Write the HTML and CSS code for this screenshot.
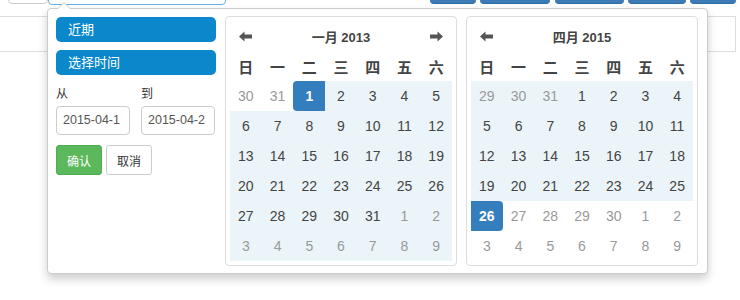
FILE: index.html
```html
<!DOCTYPE html>
<html lang="zh-CN">
<head>
  <meta charset="UTF-8">
  <title>日期范围选择</title>
  <link rel="stylesheet" href="styles.css">
</head>
<body>
  <div class="topbar">
    <span class="tb-item tb-grey"></span>
    <span class="tb-item tb-input"></span>
    <span class="tb-item tb-blue b1"></span>
    <span class="tb-item tb-blue b2"></span>
    <span class="tb-item tb-blue b3"></span>
    <span class="tb-item tb-blue b4"></span>
    <span class="tb-item tb-blue b5"></span>
  </div>
  <div class="panel"></div>

  <div class="picker">
    <div class="ranges">
      <ul>
        <li>近期</li>
        <li>选择时间</li>
      </ul>
      <div class="range-inputs">
        <div class="range-field">
          <label>从</label>
          <div class="input-box"><span class="val">2015-04-19</span></div>
        </div>
        <div class="range-field">
          <label>到</label>
          <div class="input-box"><span class="val">2015-04-26</span></div>
        </div>
      </div>
      <div class="range-btns">
        <button class="btn btn-ok">确认</button>
        <button class="btn btn-cancel">取消</button>
      </div>
    </div>

    <div class="calendar">
      <div class="cal-grid">
        <span class="arrow"><svg width="13" height="11" viewBox="0 0 13 11"><polygon points="0,5.5 5.5,0.5 5.5,3.5 13,3.5 13,7.5 5.5,7.5 5.5,10.5" fill="#555"/></svg></span>
        <span class="month">一月 2013</span>
        <span class="arrow"><svg width="13" height="11" viewBox="0 0 13 11"><polygon points="13,5.5 7.5,0.5 7.5,3.5 0,3.5 0,7.5 7.5,7.5 7.5,10.5" fill="#555"/></svg></span>

        <span class="wd">日</span><span class="wd">一</span><span class="wd">二</span><span class="wd">三</span><span class="wd">四</span><span class="wd">五</span><span class="wd">六</span>

        <span class="d off">30</span><span class="d off">31</span><span class="d active start">1</span><span class="d in">2</span><span class="d in">3</span><span class="d in">4</span><span class="d in">5</span>
        <span class="d in">6</span><span class="d in">7</span><span class="d in">8</span><span class="d in">9</span><span class="d in">10</span><span class="d in">11</span><span class="d in">12</span>
        <span class="d in">13</span><span class="d in">14</span><span class="d in">15</span><span class="d in">16</span><span class="d in">17</span><span class="d in">18</span><span class="d in">19</span>
        <span class="d in">20</span><span class="d in">21</span><span class="d in">22</span><span class="d in">23</span><span class="d in">24</span><span class="d in">25</span><span class="d in">26</span>
        <span class="d in">27</span><span class="d in">28</span><span class="d in">29</span><span class="d in">30</span><span class="d in">31</span><span class="d in off">1</span><span class="d in off">2</span>
        <span class="d in off">3</span><span class="d in off">4</span><span class="d in off">5</span><span class="d in off">6</span><span class="d in off">7</span><span class="d in off">8</span><span class="d in off">9</span>
      </div>
    </div>

    <div class="calendar">
      <div class="cal-grid">
        <span class="arrow"><svg width="13" height="11" viewBox="0 0 13 11"><polygon points="0,5.5 5.5,0.5 5.5,3.5 13,3.5 13,7.5 5.5,7.5 5.5,10.5" fill="#555"/></svg></span>
        <span class="month">四月 2015</span>
        <span class="arrow"></span>

        <span class="wd">日</span><span class="wd">一</span><span class="wd">二</span><span class="wd">三</span><span class="wd">四</span><span class="wd">五</span><span class="wd">六</span>

        <span class="d in off">29</span><span class="d in off">30</span><span class="d in off">31</span><span class="d in">1</span><span class="d in">2</span><span class="d in">3</span><span class="d in">4</span>
        <span class="d in">5</span><span class="d in">6</span><span class="d in">7</span><span class="d in">8</span><span class="d in">9</span><span class="d in">10</span><span class="d in">11</span>
        <span class="d in">12</span><span class="d in">13</span><span class="d in">14</span><span class="d in">15</span><span class="d in">16</span><span class="d in">17</span><span class="d in">18</span>
        <span class="d in">19</span><span class="d in">20</span><span class="d in">21</span><span class="d in">22</span><span class="d in">23</span><span class="d in">24</span><span class="d in">25</span>
        <span class="d active end">26</span><span class="d off">27</span><span class="d off">28</span><span class="d off">29</span><span class="d off">30</span><span class="d off">1</span><span class="d off">2</span>
        <span class="d off">3</span><span class="d off">4</span><span class="d off">5</span><span class="d off">6</span><span class="d off">7</span><span class="d off">8</span><span class="d off">9</span>
      </div>
    </div>
  </div>
</body>
</html>
```

FILE: styles.css
```css
html, body { min-height: 300px; }
body { margin: 0; background: #fff; font-family: "Liberation Sans", "Noto Sans CJK SC", sans-serif; color: #333; position: relative; }

.topbar { display: flex; align-items: flex-end; height: 6px; overflow: hidden; }
.tb-item { display: block; height: 20px; border-radius: 0 0 4px 4px; box-sizing: border-box; }
.tb-grey { margin-left: 8px; width: 40px; border: 1px solid #ccc; margin-bottom: 2px; }
.tb-input { width: 178px; border: 1px solid #66afe9; margin-bottom: 1px; }
.tb-blue { background: #3c7bb5; border-bottom: 1px solid #2e6da4; margin-bottom: 2px; }
.b1 { margin-left: 204px; width: 46px; }
.b2 { margin-left: 4px; width: 70px; }
.b3 { margin-left: 5px; width: 69px; }
.b4 { margin-left: 4px; width: 58px; }
.b5 { margin-left: 4px; width: 46px; }

.panel { margin: 10px 4px 0 -1px; height: 36px; border: 1px solid #ddd; box-sizing: border-box; }

.picker { position: absolute; top: 8px; left: 47px; display: flex; gap: 9px; padding: 7px 9px 7px 8px; background: #fff; border: 1px solid #ccc; border-radius: 4px; box-shadow: 0 5px 10px rgba(0,0,0,.2); }
.picker::before { content: ""; position: absolute; top: -7px; left: 9px; border-left: 7px solid transparent; border-right: 7px solid transparent; border-bottom: 7px solid #ccc; }
.picker::after { content: ""; position: absolute; top: -6px; left: 10px; border-left: 6px solid transparent; border-right: 6px solid transparent; border-bottom: 6px solid #fff; }

.ranges { width: 160px; padding-top: 1px; }
.ranges ul { list-style: none; margin: 0; padding: 0; }
.ranges li { height: 25px; line-height: 25px; margin-bottom: 8px; padding-left: 12px; background: #0a88cb; color: #fff; font-size: 13px; border-radius: 5px; }
.range-inputs { display: flex; gap: 11px; margin-top: 2px; }
.range-field label { display: block; font-size: 12px; line-height: 22px; color: #333; margin-bottom: 1px; }
.input-box { width: 74px; height: 29px; box-sizing: border-box; border: 1px solid #ccc; border-radius: 4px; padding: 0 6px; }
.input-box .val { display: block; width: 57px; overflow: hidden; white-space: nowrap; line-height: 27px; font-size: 12.5px; color: #555; }
.range-btns { display: flex; gap: 4px; margin-top: 10px; }
.btn { height: 30px; width: 46px; padding: 0; border-radius: 3px; font: 12px "Liberation Sans", "Noto Sans CJK SC", sans-serif; }
.btn-ok { background: #5cb85c; border: 1px solid #4cae4c; color: #fff; }
.btn-cancel { background: #fff; border: 1px solid #ccc; color: #333; }

.calendar { width: 232px; box-sizing: border-box; padding: 4px; border: 1px solid #ddd; border-radius: 4px; }
.cal-grid { display: grid; grid-template-columns: repeat(7, 1fr); grid-auto-rows: 30px; }
.arrow { display: flex; align-items: center; justify-content: center; }
.month { grid-column: span 5; display: flex; align-items: center; justify-content: center; font-size: 13px; font-weight: bold; color: #444; }
.wd { display: flex; align-items: center; justify-content: center; font-size: 15px; font-weight: bold; color: #444; }
.d { display: flex; align-items: center; justify-content: center; font-size: 14px; color: #444; }
.d.in { background: #ebf4f8; }
.d.off { color: #999; }
.d.active { background: #357ebd; color: #fff; font-weight: bold; }
.d.start { border-radius: 4px 0 0 4px; }
.d.end { border-radius: 0 4px 4px 0; }
```
